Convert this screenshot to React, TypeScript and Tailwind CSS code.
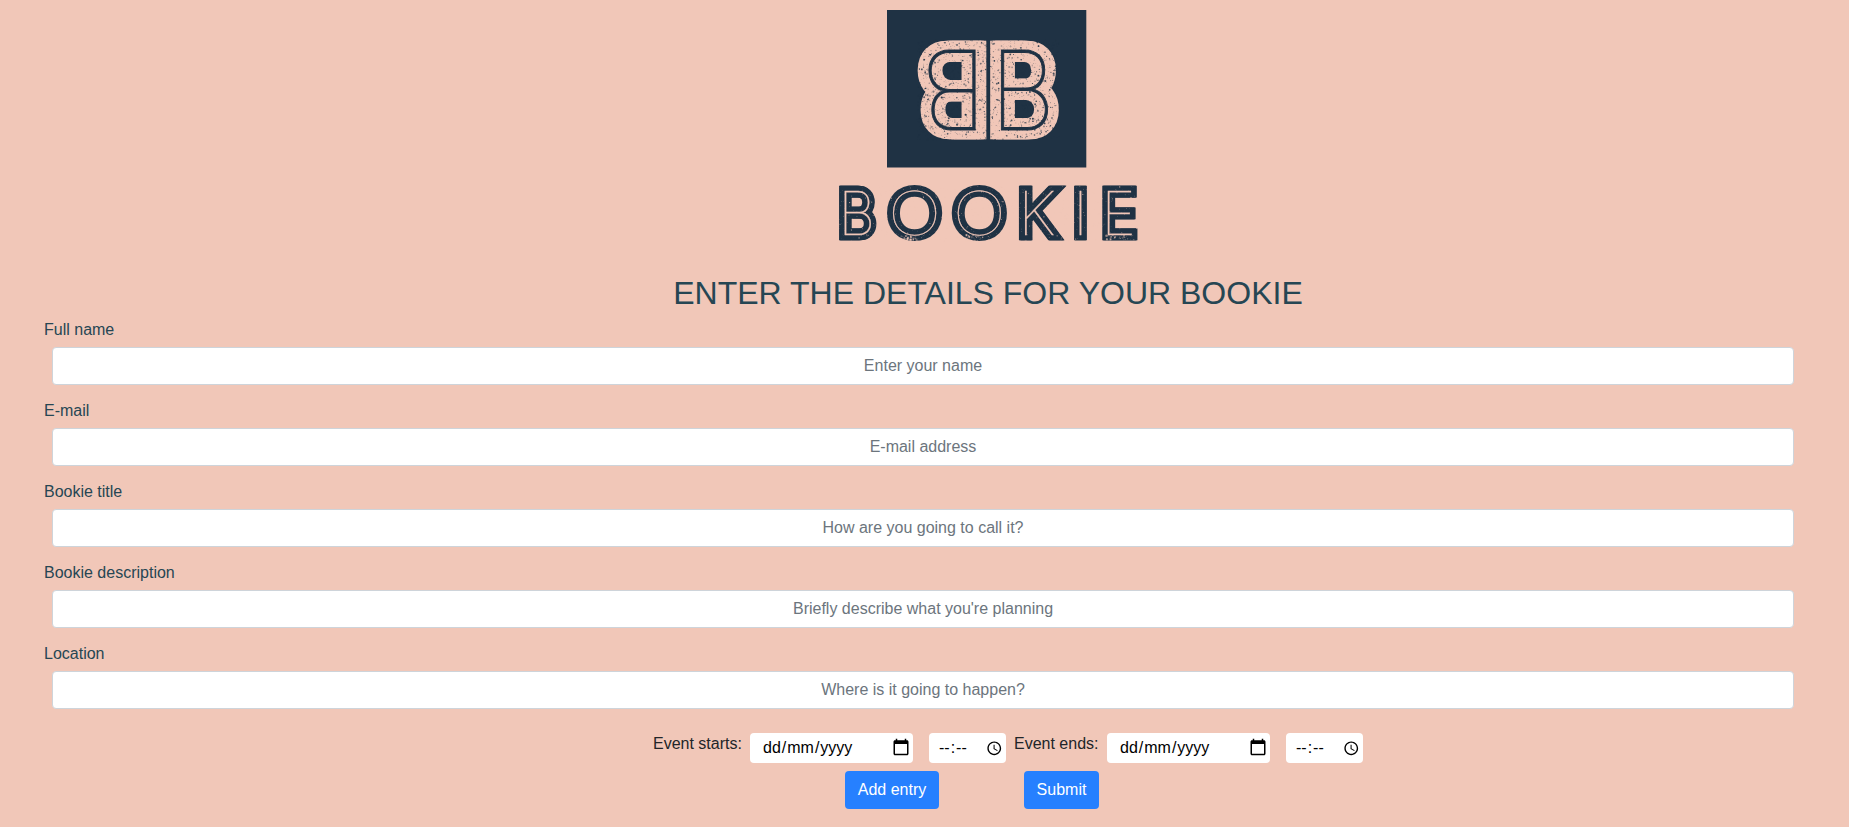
import React from "react";

type Speck = { x: number; y: number; r: number; o: number };

function specks(count: number, x: number, y: number, w: number, h: number, seed: number, max: number): Speck[] {
  let s = seed;
  const next = () => {
    s = (s * 1664525 + 1013904223) % 4294967296;
    return s / 4294967296;
  };
  return Array.from({ length: count }, () => ({
    x: x + next() * w,
    y: y + next() * h,
    r: 0.2 + next() * next() * max,
    o: 0.25 + next() * 0.7,
  }));
}

const emblemSpecks = specks(1900, 917, 40, 142, 100, 7, 0.9);
const wordSpecks = specks(900, 838, 186, 302, 56, 21, 0.5);
const wornSpecks = [
  ...specks(50, 900, 235, 18, 6, 3, 1.2),
  ...specks(50, 965, 235, 18, 6, 5, 1.2),
  ...specks(55, 1106, 235, 22, 5, 9, 1.1),
];

const NAVY = "#1f3244";
const PEACH = "#f1c7b8";

type Glyph = { c: string; x: number; w: number; stroke: number; spread: number; size: number; y: number };

const word: Glyph[] = [
  { c: "B", x: 844.7, w: 26.4, stroke: 10.4, spread: 0.65, size: 60, y: 235.3 },
  { c: "O", x: 892.1, w: 46.6, stroke: 11.2, spread: 0, size: 61.5, y: 235.4 },
  { c: "O", x: 956.8, w: 46.6, stroke: 11.2, spread: 0, size: 61.5, y: 235.4 },
  { c: "K", x: 1025, w: 31.5, stroke: 10.4, spread: 0.6, size: 60, y: 235.3 },
  { c: "I", x: 1079.8, w: 1, stroke: 10.4, spread: 0.5, size: 60, y: 235.3 },
  { c: "E", x: 1108, w: 24.3, stroke: 10.4, spread: 0.6, size: 60, y: 235.3 },
];

const emblem: Glyph = { c: "B", x: 1001.2, w: 46.8, stroke: 18.7, spread: 2.5, size: 110.5, y: 130.2 };

/* Ink bounds of the thin capitals, per em: left bearing and width. */
const ink: Record<string, [number, number]> = {
  B: [0.112, 0.455],
  O: [0.055, 0.7],
  K: [0.112, 0.5],
  I: [0.112, 0.02],
  E: [0.112, 0.41],
};

function Letter({ g, stroke, spread, color }: { g: Glyph; stroke: number; spread: number; color: string }) {
  const [left, width] = ink[g.c];
  const sx = g.c === "I" ? 1 : g.w / (width * g.size);
  const shifts = spread ? [-spread, 0, spread] : [0];
  return (
    <>
      {shifts.map((dx) => (
        <text
          key={dx}
          transform={`translate(${g.x + dx - left * g.size * sx} ${g.y}) scale(${sx} 1)`}
          fontFamily={g.c === "O" ? "Lato, sans-serif" : "Inter, sans-serif"}
          fontWeight={100}
          fontSize={g.size}
          fill={color}
          stroke={color}
          strokeWidth={stroke}
          strokeLinejoin="miter"
          strokeMiterlimit={g.c === "K" ? 3 : 2}
        >
          {g.c}
        </text>
      ))}
    </>
  );
}

function Logo() {
  return (
    <svg className="block h-[250px] w-[316px]" viewBox="830 0 316 250" role="img" aria-label="Bookie">
      <rect x="887" y="10" width="199.3" height="157.5" fill={NAVY} />
      {["", "rotate(180 988.2 90)"].map((turn) => (
        <g key={turn} transform={turn || undefined}>
          <Letter g={emblem} stroke={emblem.stroke} spread={emblem.spread} color={PEACH} />
          <Letter g={emblem} stroke={1} spread={0} color={NAVY} />
        </g>
      ))}
      {emblemSpecks.map((p, i) => (
        <circle key={i} cx={p.x} cy={p.y} r={p.r} fill={NAVY} opacity={p.o} />
      ))}
      {word.map((g, i) => (
        <g key={i}>
          <Letter g={g} stroke={g.stroke} spread={g.spread} color={NAVY} />
          <Letter g={g} stroke={0.3} spread={0} color={PEACH} />
        </g>
      ))}
      {[...wordSpecks, ...wornSpecks].map((p, i) => (
        <circle key={i} cx={p.x} cy={p.y} r={p.r} fill={PEACH} opacity={p.o} />
      ))}
    </svg>
  );
}

const fields = [
  ["Full name", "Enter your name"],
  ["E-mail", "E-mail address"],
  ["Bookie title", "How are you going to call it?"],
  ["Bookie description", "Briefly describe what you're planning"],
  ["Location", "Where is it going to happen?"],
];

function DateBox() {
  return (
    <div className="flex h-[30px] w-[163px] items-center justify-between rounded bg-white pr-[3.5px] pl-[12px] text-black">
      <span className="whitespace-nowrap">
        <span className="px-px">dd</span>/<span className="px-px">mm</span>/<span className="px-px">yyyy</span>
      </span>
      <svg className="mb-[2px] h-[18px] w-[18px]" viewBox="0 0 24 24">
        <path d="M20 3h-1V1h-2v2H7V1H5v2H4c-1.1 0-2 .9-2 2v16c0 1.1.9 2 2 2h16c1.1 0 2-.9 2-2V5c0-1.1-.9-2-2-2zm0 18H4V8h16v13z" />
      </svg>
    </div>
  );
}

function TimeBox() {
  return (
    <div className="flex h-[30px] w-[77px] items-center justify-between rounded bg-white pr-[4px] pl-[9px] text-black">
      <span className="whitespace-nowrap">
        <span className="px-px">--</span>:<span className="px-px">--</span>
      </span>
      <svg className="h-[16.5px] w-[16.5px]" viewBox="0 0 24 24">
        <path d="M11.99 2C6.47 2 2 6.48 2 12s4.47 10 9.99 10C17.52 22 22 17.52 22 12S17.52 2 11.99 2zM12 20c-4.42 0-8-3.58-8-8s3.58-8 8-8 8 3.58 8 8-3.58 8-8 8zm.5-13H11v6l5.25 3.15.75-1.23-4.5-2.67z" />
      </svg>
    </div>
  );
}

export default function App() {
  return (
    <div className="h-[827px] overflow-hidden bg-[#f1c7b8] font-['Liberation_Sans',Arial,sans-serif] text-base text-[#212529]">
      <header className="flex flex-col items-center pl-[127px]">
        <Logo />
        <h1 className="mt-[24px] text-[32px] leading-[38px] text-[#264653]">ENTER THE DETAILS FOR YOUR BOOKIE</h1>
      </header>
      <form className="pt-[6px]">
        {fields.map(([label, placeholder]) => (
          <div key={label} className="mb-[14px] pr-[55px] pl-11">
            <label className="block h-[29px] leading-6 text-[#264653]">{label}</label>
            <input
              className="ml-2 block h-[38px] w-[1742px] rounded border border-[#ced4da] bg-white px-3 text-center placeholder:text-[#6c757d]"
              placeholder={placeholder}
            />
          </div>
        ))}
        <div className="flex pt-[10px] pl-[653px]">
          <span className="-mt-px w-[97px] leading-6">Event starts:</span>
          <DateBox />
          <div className="ml-4"><TimeBox /></div>
          <span className="-mt-px ml-2 w-[93px] leading-6">Event ends:</span>
          <DateBox />
          <div className="ml-4"><TimeBox /></div>
        </div>
        <div className="mt-2 flex gap-[85px] pl-[845px]">
          <button type="button" className="h-[38px] w-[94px] rounded bg-[#2680ff] text-white">Add entry</button>
          <button type="button" className="h-[38px] w-[75px] rounded bg-[#2680ff] text-white">Submit</button>
        </div>
      </form>
    </div>
  );
}
